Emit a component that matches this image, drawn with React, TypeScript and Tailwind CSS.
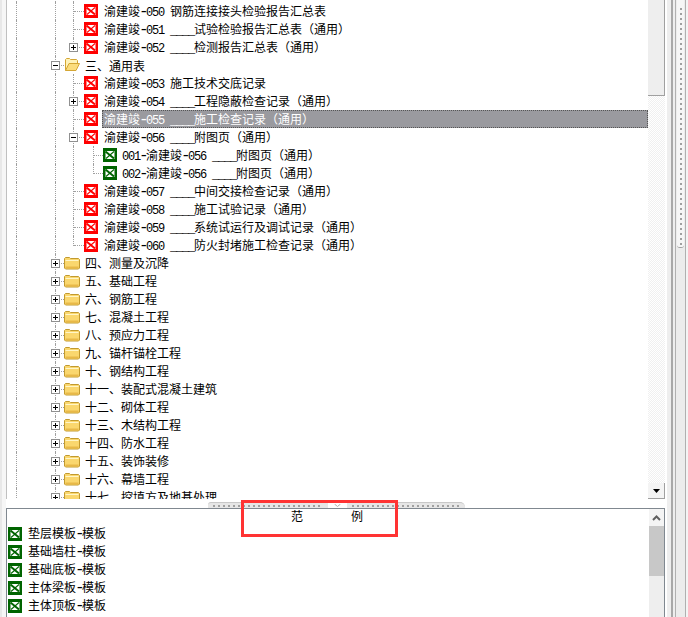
import React from 'react';

const Text: React.FC<{ text: string }> = ({ text }) => (
    <>
        {text.split(/(-|[\x20-\x7e]+?(?=-|[^\x20-\x7e]|$))/).map((part, i) => {
            if (part === '-') {
                return <span key={i} className="-ml-[1px] mr-[1px] font-['Liberation_Mono',monospace] text-[16px] leading-none tracking-[-3.6px]">-</span>;
            }
            return /^[\x20-\x7e]+$/.test(part) ? (
                <span key={i} className="font-['Liberation_Mono',monospace] tracking-[-1.2px]">{part}</span>
            ) : (
                <span key={i}>{part}</span>
            );
        })}
    </>
);

const SheetIcon: React.FC<{ green?: boolean }> = ({ green }) => {
    const color = green ? '#006400' : '#ff0000';
    return (
        <svg width="14" height="14" viewBox="0 0 14 14" className="shrink-0">
            <rect width="14" height="14" fill={color} />
            <rect x="2.5" y="3" width="9" height="8" fill="#fff" />
            <path d="M2.5 3.5L11 10.5" stroke={color} strokeWidth="2" />
            <path d="M11 3.5L3 10.5" stroke={color} strokeWidth="1.1" />
        </svg>
    );
};

const FolderIcon: React.FC<{ open?: boolean }> = ({ open }) => (
    <svg width="16" height="14" viewBox="0 0 16 14" className="shrink-0">
        {open ? (
            <>
                <path d="M1.5 12.5V1.5l1-1h3l1 1h6l1 1v3" fill="#fff2b8" stroke="#d4a634" />
                <path d="M1.5 12.5l3.5-7h10.500l-3.500 7z" fill="#fbdc7c" stroke="#d4a634" />
            </>
        ) : (
            <>
                <path d="M.5 12V2.500l1-1h4l1 1h8l1 1V12l-1 1h-13z" fill="#fad76e" stroke="#c29a2e" />
                <path d="M1.500 4.500h13" stroke="#fff6c8" />
                <path d="M1.500 11.500h13" stroke="#e8b848" strokeWidth="2" />
            </>
        )}
    </svg>
);

const Guide: React.FC<{ w: string }> = ({ w }) => (
    <div className={`${w} h-full shrink-0 border-l border-dotted border-[#a0a0a0]`} />
);

// connector cell: dotted elbow, and the +/- box when the node has children
const Elbow: React.FC<{ w: string; box?: '+' | '-'; last?: boolean }> = ({ w, box, last }) => (
    <div className={`relative ${w} h-full shrink-0`}>
        <div className={`absolute left-[9px] top-0 border-l border-dotted border-[#a0a0a0] ${last ? 'h-[10px]' : 'h-full'}`} />
        <div className="absolute left-[10px] right-0 top-[9px] border-t border-dotted border-[#a0a0a0]" />
        {box && (
            <svg width="9" height="9" viewBox="0 0 9 9" className="absolute left-[5px] top-[5px]" shapeRendering="crispEdges">
                <rect x="0.5" y="0.5" width="8" height="8" fill="#fff" stroke="#909090" />
                <path d="M2 4h5v1H2z" fill="#000" />
                {box === '+' && <path d="M4 2h1v5H4z" fill="#000" />}
            </svg>
        )}
    </div>
);

const Row: React.FC<{ children: React.ReactNode }> = ({ children }) => (
    <div className="flex h-[18px] items-center pl-[9px]">
        <Guide w="w-[39px]" />
        {children}
    </div>
);

const Label: React.FC<{ text: string; selected?: boolean; tight?: boolean }> = ({ text, selected, tight }) => (
    <div
        className={
            selected
                ? 'ml-[4px] flex h-[18px] flex-1 items-center border border-dotted border-[#555] bg-[#9a9a9f] pt-[1px] pl-[1px] text-white'
                : `ml-[4px] pt-[1px] ${tight ? 'pl-[1px]' : 'pl-[2px]'}`
        }
    >
        {selected ? <div><Text text={text} /></div> : <Text text={text} />}
    </div>
);

const Item: React.FC<{ text: string; box?: '+' | '-'; last?: boolean; selected?: boolean }> = ({ text, box, last, selected }) => (
    <Row>
        <Guide w="w-[9px]" />
        <Elbow w="w-[20px]" box={box} last={last} />
        <SheetIcon />
        <Label text={text} selected={selected} />
    </Row>
);

const SubItem: React.FC<{ text: string; last?: boolean }> = ({ text, last }) => (
    <Row>
        <Guide w="w-[18px]" />
        <Guide w="w-[11px]" />
        <Elbow w="w-[19px]" last={last} />
        <SheetIcon green />
        <Label text={text} tight />
    </Row>
);

const Folder: React.FC<{ text: string; open?: boolean }> = ({ text, open }) => (
    <div className="flex h-[18px] items-center pl-[9px]">
        <Guide w="w-[30px]" />
        <Elbow w="w-[18px]" box={open ? '-' : '+'} />
        <FolderIcon open={open} />
        <div className={`ml-[5px] ${open ? 'pt-[1px]' : ''}`}><Text text={text} /></div>
    </div>
);

const folders = [
    '四、测量及沉降',
    '五、基础工程',
    '六、钢筋工程',
    '七、混凝土工程',
    '八、预应力工程',
    '九、锚杆锚栓工程',
    '十、钢结构工程',
    '十一、装配式混凝土建筑',
    '十二、砌体工程',
    '十三、木结构工程',
    '十四、防水工程',
    '十五、装饰装修',
    '十六、幕墙工程',
    '十七、挖填方及地基处理',
];

const templates = ['垫层模板-模板', '基础墙柱-模板', '基础底板-模板', '主体梁板-模板', '主体顶板-模板'];

const GripDots: React.FC<{ w: string; rounded: string }> = ({ w, rounded }) => (
    <div className={`${w} ${rounded} flex h-[6px] items-center border-t border-[#c8c8c8] bg-[#e6e6e6] px-[5px]`}>
        <div className="h-[2px] w-full bg-[linear-gradient(90deg,#a0a0a0_2px,transparent_2px)] bg-[length:5px_2px]" />
    </div>
);

export default function App() {
    return (
        <div className="relative flex h-[617px] w-[688px] overflow-hidden bg-white font-['Noto_Sans_CJK_SC','Noto_Sans',sans-serif] text-[12px] leading-[18px] text-black whitespace-pre">
            {/* left edge */}
            <div className="flex w-[6px] shrink-0">
                <div className="w-[2px] bg-[#e8e8e8]" />
                <div className="flex-1 bg-[#f6f6f6]" />
            </div>

            <div className="flex w-[659px] shrink-0 flex-col">
                {/* tree */}
                <div className="flex h-[499px] border-l border-[#c0c0c0]">
                    <div className="flex-1 overflow-hidden">
                        <div className="-mt-[16px]">
                            <Row>
                                <Guide w="w-[9px]" />
                                <Elbow w="w-[20px]" />
                                <SheetIcon />
                            </Row>
                            <Item text="渝建竣-050 钢筋连接接头检验报告汇总表" />
                            <Item text="渝建竣-051 ____试验检验报告汇总表（通用）" />
                            <Item text="渝建竣-052 ____检测报告汇总表（通用）" box="+" last />
                            <Folder text="三、通用表" open />
                            <Item text="渝建竣-053 施工技术交底记录" />
                            <Item text="渝建竣-054 ____工程隐蔽检查记录（通用）" box="+" />
                            <Item text="渝建竣-055 ____施工检查记录（通用）" selected />
                            <Item text="渝建竣-056 ____附图页（通用）" box="-" />
                            <SubItem text="001-渝建竣-056 ____附图页（通用）" />
                            <SubItem text="002-渝建竣-056 ____附图页（通用）" last />
                            <Item text="渝建竣-057 ____中间交接检查记录（通用）" />
                            <Item text="渝建竣-058 ____施工试验记录（通用）" />
                            <Item text="渝建竣-059 ____系统试运行及调试记录（通用）" />
                            <Item text="渝建竣-060 ____防火封堵施工检查记录（通用）" last />
                            {folders.map((f) => (
                                <Folder key={f} text={f} />
                            ))}
                        </div>
                    </div>
                    <div className="flex w-[17px] shrink-0 flex-col">
                        <div className="h-[96px] border-r border-b border-[#a0a0a0] bg-[#eeeeee]" />
                        <div className="flex-1 bg-[repeating-conic-gradient(#f0f0f0_0_25%,#fff_0_50%)] bg-[length:2px_2px]" />
                        <div className="flex h-[16px] items-center justify-center border-r border-b border-[#a0a0a0] bg-[#f4f4f4]">
                            <svg width="7" height="4" viewBox="0 0 7 4"><path d="M0 0h7L3.5 4z" fill="#000" /></svg>
                        </div>
                    </div>
                </div>

                {/* horizontal splitter */}
                <div className="flex h-[9px] items-end pl-[202px]">
                    <GripDots w="w-[120px]" rounded="rounded-tl-[3px]" />
                    <div className="flex h-[6px] w-[19px] items-center justify-center bg-white">
                        <svg width="7" height="3" viewBox="0 0 7 3"><path d="M.5 0l3 2.5 3-2.5" fill="none" stroke="#b0b0b0" /></svg>
                    </div>
                    <GripDots w="w-[118px]" rounded="rounded-tr-[5px]" />
                </div>

                {/* lower list */}
                <div className="flex min-h-0 flex-1 border-t border-r border-l border-[#808890]">
                    <div className="flex-1">
                        <div className="h-[16px] pr-[1px] text-center leading-[14px]">
                            <Text text="范        例" />
                        </div>
                        {templates.map((t) => (
                            <div key={t} className="flex h-[18px] items-center gap-[6px] pl-[1px]">
                                <SheetIcon green />
                                <div className="mb-[2px]"><Text text={t} /></div>
                            </div>
                        ))}
                    </div>
                    <div className="flex w-[16px] shrink-0 flex-col border-l border-white bg-[#eeeeee]">
                        <div className="flex h-[17px] items-center justify-center bg-[#f4f4f4]">
                            <svg width="9" height="6" viewBox="0 0 9 6"><path d="M1 5l3.500-3.500L8 5" fill="none" stroke="#606060" strokeWidth="2" /></svg>
                        </div>
                        <div className="h-[50px] bg-[#c8c8c8]" />
                    </div>
                </div>
            </div>

            {/* vertical splitter on the right */}
            <div className="flex flex-1">
                <div className="w-[2px] bg-white" />
                <div className="w-[4px] bg-[#eeeeee]" />
                <div className="w-[2px] bg-[#a8a8a8]" />
                <div className="w-[2px] bg-[#eeeeee]" />
                <div className="w-[1px] bg-[#b0b0b0]" />
                <div className="w-[9px] bg-[#ececec]">
                    <div className="ml-[1px] flex h-[248px] w-[7px] justify-center rounded-b-[3px] border-b border-[#a0a0a0] bg-[#f6f6f6]">
                        <div className="mt-[8px] h-[238px] w-[2px] bg-[linear-gradient(#a0a0a0_2px,transparent_2px)] bg-[length:2px_5px]" />
                    </div>
                </div>
                <div className="w-[1px] bg-[#b0b0b0]" />
                <div className="flex-1 bg-[#f4f4f4]" />
            </div>

            {/* red annotation box */}
            <div className="absolute left-[241px] top-[500px] h-[37px] w-[157px] border-[3px] border-[#ff3333]" />
        </div>
    );
}
